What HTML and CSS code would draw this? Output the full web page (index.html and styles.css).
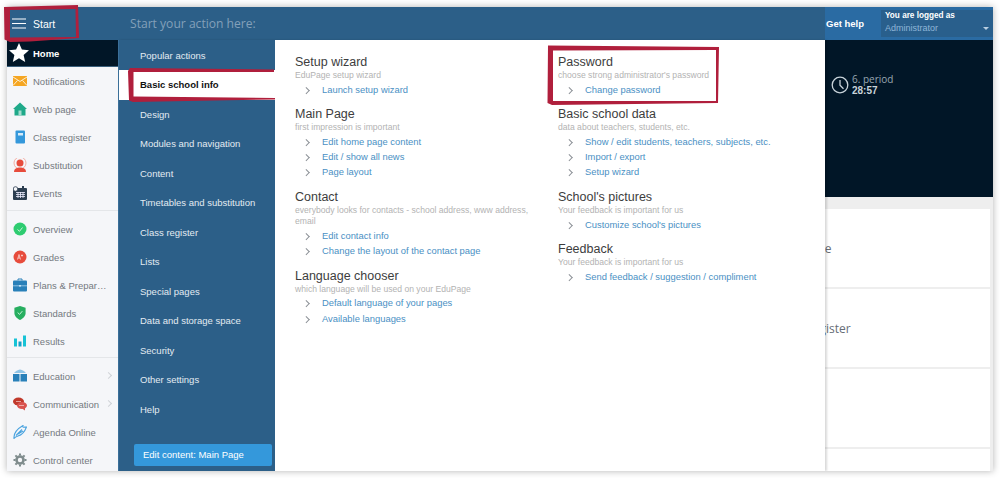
FILE: index.html
```html
<!DOCTYPE html>
<html lang="en">
<head>
<meta charset="utf-8">
<title>EduPage</title>
<link rel="stylesheet" href="styles.css">
</head>
<body>
<div class="window">
  <header class="topbar">
    <div class="start">
      <svg class="burger" viewBox="0 0 14 11" width="14" height="11"><path d="M0 1h14M0 5.500h14M0 10h14" stroke="#fff" stroke-width="1.200" fill="none"/></svg>
      <span>Start</span>
    </div>
    <div class="prompt">Start your action here:</div>
    <div class="help">Get help</div>
    <div class="user">
      <b>You are logged as</b>
      <span>Administrator</span>
      <i class="caret"></i>
    </div>
  </header>
  <div class="body">
    <nav class="sidebar">
      <div class="side-item home">
        <svg class="star" viewBox="0 0 20 20" width="20" height="20"><path d="M10 0l2.900 6.600 7.100.7-5.400 4.700 1.600 7-6.200-3.700-6.200 3.700 1.600-7L0 7.300l7.100-.7z" fill="#fff"/></svg>
        <span>Home</span>
      </div>
      <div class="group">
        <div class="side-item"><svg class="ico" viewBox="0 0 14 10"><rect width="14" height="10" fill="#f5a623"/><path d="M0 1l7 4.500L14 1M0 9.500l4.500-5M14 9.500l-4.500-5" stroke="#fff" stroke-width=".8" fill="none"/></svg><span>Notifications</span></div>
        <div class="side-item"><svg class="ico" viewBox="0 0 14 13"><path d="M7 0l7 6.500h-1.500V13h-11V6.500H0z" fill="#1fa98a"/><rect x="5.500" y="8" width="3" height="5" fill="#a5dccf"/></svg><span>Web page</span></div>
        <div class="side-item"><svg class="ico" viewBox="0 0 14 13"><rect x="2.500" width="9.500" height="13" rx="1" fill="#3498db"/><rect x="5" y="2.500" width="5" height="2.500" fill="#d5ebf9"/></svg><span>Class register</span></div>
        <div class="side-item"><svg class="ico" viewBox="0 0 14 14"><circle cx="7" cy="5" r="6" fill="none" stroke="#f4a79c" stroke-width=".9"/><circle cx="7" cy="5" r="3.500" fill="#e74c3c"/><path d="M1 14c0-3.500 3-4.500 6-4.500s6 1 6 4.500z" fill="#e74c3c"/></svg><span>Substitution</span></div>
        <div class="side-item"><svg class="ico" viewBox="0 0 14 14"><rect y="2" width="14" height="12" rx="1" fill="#2c3e50"/><path d="M3 6.500h9M3 8.500h9M3 10.500h9M5 6v6M7.500 6v6M10 6v6" stroke="#eef" stroke-width=".8"/><circle cx="2.500" cy="3" r="2.300" fill="#f5f6f9" stroke="#2c3e50" stroke-width=".8"/><rect x="9" width="2" height="3" fill="#2c3e50"/></svg><span>Events</span></div>
      </div>
      <div class="group">
        <div class="side-item"><svg class="ico" viewBox="0 0 14 14"><circle cx="7" cy="7" r="6.500" fill="#2ecc71"/><path d="M4.500 7.500l2 1.800 3-3.800" stroke="#c9f3da" stroke-width="1" fill="none"/></svg><span>Overview</span></div>
        <div class="side-item"><svg class="ico" viewBox="0 0 14 14"><circle cx="7" cy="7" r="6.500" fill="#e74c3c"/><path d="M4.500 9.500L6 4.500l1.500 5M5 8h2M9 4.500v2M8 5.500h2" stroke="#fbd9d5" stroke-width=".8" fill="none"/></svg><span>Grades</span></div>
        <div class="side-item"><svg class="ico" viewBox="0 0 14 13"><path d="M5 2V.5h4V2" stroke="#2980b9" fill="none"/><rect y="2" width="14" height="11" rx="1" fill="#2980b9"/><path d="M0 7.300h14" stroke="#bfe0f5" stroke-width=".7"/><rect x="6" y="6.500" width="2" height="1.600" fill="#bfe0f5"/></svg><span>Plans &amp; Prepar…</span></div>
        <div class="side-item"><svg class="ico" viewBox="0 0 14 15"><path d="M7 0l6 2v5.500c0 3.500-3 6-6 7.500-3-1.500-6-4-6-7.500V2z" fill="#27ae60"/><path d="M4.500 7l2 2 3-3.500" stroke="#d3f5e0" fill="none"/></svg><span>Standards</span></div>
        <div class="side-item"><svg class="ico" viewBox="0 0 14 13"><path d="M1 4h3v8H1z" fill="#17c3d6"/><path d="M5.500 7h3v5h-3z" fill="#17a0c9"/><path d="M10 1h3v11h-3z" fill="#17c3d6"/></svg><span>Results</span></div>
      </div>
      <div class="group last">
        <div class="side-item"><svg class="ico" viewBox="0 0 14 13"><path d="M7 0c2.500.5 4.500 1.500 6 3.500H1C2.500 1.500 4.500.5 7 0z" fill="#8fc4e6"/><path d="M0 4.500h6.500V12H0zM7.500 4.500H14V12H7.500z" fill="#2980b9"/></svg><span>Education</span><i class="chev"></i></div>
        <div class="side-item"><svg class="ico" viewBox="0 0 14 13"><ellipse cx="5.500" cy="4" rx="5.500" ry="4" fill="#c0392b"/><ellipse cx="9" cy="8" rx="5" ry="3.500" fill="#d9534f"/><path d="M9 11l3 2v-3z" fill="#d9534f"/><path d="M3 4h5M6 8h5" stroke="#f7cfcb" stroke-width=".7"/></svg><span>Communication</span><i class="chev"></i></div>
        <div class="side-item"><svg class="ico" viewBox="0 0 14 14"><path d="M1 13.500C.5 9 4 4 10 .5 9 3 11 2 13.500 2 12 6 9 10 5 11c-1.500.5-3 1-4 2.500zM3 10.500L9 4.500M5 9l5-3" fill="none" stroke="#4aa3df" stroke-width="1.100"/></svg><span>Agenda Online</span></div>
        <div class="side-item"><svg class="ico" viewBox="0 0 14 14"><circle cx="7" cy="7" r="3.500" fill="none" stroke="#7f8c8d" stroke-width="2.600"/><path d="M7 .5v13M.5 7h13M2.400 2.400l9.200 9.200M11.600 2.400l-9.200 9.200" stroke="#7f8c8d" stroke-width="2" stroke-dasharray="2 9"/></svg><span>Control center</span></div>
      </div>
    </nav>
    <main class="dashboard">
      <section class="hero">
        <div class="period">
          <svg viewBox="0 0 18 18" width="18" height="18"><circle cx="9" cy="9" r="7.800" fill="none" stroke="#c9d3da" stroke-width="1.300"/><path d="M9 4v5.200l3.500 3.600" fill="none" stroke="#c9d3da" stroke-width="1.300"/></svg>
          <div class="period-text"><span>6. period</span><b>28:57</b></div>
        </div>
      </section>
      <section class="cards">
        <div class="card">Web page</div>
        <div class="card">Class register</div>
        <div class="card"></div>
        <div class="card"></div>
      </section>
    </main>
  </div>
  <div class="menu">
    <aside class="menu-nav">
      <ul class="menu-list">
        <li>Popular actions</li>
        <li class="active">Basic school info</li>
        <li>Design</li>
        <li>Modules and navigation</li>
        <li>Content</li>
        <li>Timetables and substitution</li>
        <li>Class register</li>
        <li>Lists</li>
        <li>Special pages</li>
        <li>Data and storage space</li>
        <li>Security</li>
        <li>Other settings</li>
        <li>Help</li>
      </ul>
      <div class="edit-btn">Edit content: Main Page</div>
    </aside>
    <div class="menu-content">
      <div class="col">
        <div class="block"><h3>Setup wizard</h3><p>EduPage setup wizard</p><ul><li>Launch setup wizard</li></ul></div>
        <div class="block"><h3>Main Page</h3><p>first impression is important</p><ul><li>Edit home page content</li><li>Edit / show all news</li><li>Page layout</li></ul></div>
        <div class="block"><h3>Contact</h3><p>everybody looks for contacts - school address, www address, email</p><ul><li>Edit contact info</li><li>Change the layout of the contact page</li></ul></div>
        <div class="block"><h3>Language chooser</h3><p>which language will be used on your EduPage</p><ul><li>Default language of your pages</li><li>Available languages</li></ul></div>
      </div>
      <div class="col">
        <div class="block"><h3>Password</h3><p>choose strong administrator's password</p><ul><li>Change password</li></ul></div>
        <div class="block"><h3>Basic school data</h3><p>data about teachers, students, etc.</p><ul><li>Show / edit students, teachers, subjects, etc.</li><li>Import / export</li><li>Setup wizard</li></ul></div>
        <div class="block"><h3>School's pictures</h3><p>Your feedback is important for us</p><ul><li>Customize school's pictures</li></ul></div>
        <div class="block"><h3>Feedback</h3><p>Your feedback is important for us</p><ul><li>Send feedback / suggestion / compliment</li></ul></div>
      </div>
    </div>
  </div>
</div>
<svg class="marks" viewBox="0 0 1000 478" width="1000" height="478">
  <path d="M4 7L78 5 79 38 30 41.500 10 42 4.500 39.500zM10 10L75.500 9 76 37 10 37.500z"/>
  <path d="M130 68L274 69.500 274 72 133.500 72 133.500 96.500 275 98 275 99.500 133 102 129 100.500 128 71z"/>
  <path d="M548 45.500L719 47 718 103 552 105 547.500 103zM553 50.500L716 50 716 101 553 101z"/>
</svg>
</body>
</html>
```

FILE: styles.css
```css
* { box-sizing: border-box; }
html, body { margin: 0; padding: 0; background: #fff; height: 100%; overflow: hidden; }
body { padding: 7px; font-family: "Liberation Sans", Arial, sans-serif; }
ul { list-style: none; margin: 0; padding: 0; }

.window {
  position: relative;
  width: 986px;
  height: 464px;
  display: flex;
  flex-direction: column;
  overflow: hidden;
  background: #eee;
  box-shadow: 0 0 7px rgba(0, 0, 0, .3);
}

.topbar {
  flex: 0 0 33px;
  display: flex;
  align-items: center;
  background: #2c5f88;
  color: #fff;
}
.start {
  flex: 0 0 111px;
  display: flex;
  align-items: center;
  gap: 7px;
  padding-left: 5px;
  font-size: 10.500px;
}
.prompt {
  flex: 1;
  padding-left: 12px;
  font-family: "Open Sans", sans-serif;
  font-size: 12.100px;
  color: #83a0ba;
}
.help {
  align-self: stretch;
  flex: 0 0 56px;
  display: flex;
  align-items: center;
  font-size: 9.500px;
  font-weight: bold;
  padding-left: 1px;
  background: #2a6ba3;
}
.user {
  position: relative;
  flex: 0 0 112px;
  height: 33px;
  background: #2a6ba3;
  font-size: 9px;
  line-height: 12px;
  padding-top: 3px;
}
.user b, .user span {
  display: block;
  background: #295f8c;
  padding-left: 4px;
}
.user b { font-size: 8.200px; }
.user span { color: #8fb6d8; height: 15px; }
.caret {
  position: absolute;
  right: 4px;
  top: 20px;
  border: 3px solid transparent;
  border-top: 3px solid #b9cfe2;
}

.body { flex: 1; display: flex; min-height: 0; }

.sidebar {
  flex: 0 0 111px;
  background: #f5f6f9;
  color: #74797f;
  font-size: 9.500px;
}
.side-item {
  height: 28px;
  display: flex;
  align-items: center;
  padding-left: 6px;
  position: relative;
  white-space: nowrap;
}
.side-item.home {
  height: 27px;
  padding-left: 2px;
  background: #011627;
  color: #fff;
  font-weight: bold;
  border-bottom: 1px solid #3a5f7c;
}
.star { margin-right: 4px; }
.ico { width: 14px; height: 14px; margin-right: 6px; flex: none; }
.group { padding-bottom: 2px; border-bottom: 1px solid #e4e6e9; }
.home + .group { padding-bottom: 3px; }
.group + .group { padding-top: 4px; }
.group.last { border-bottom: 0; }
.chev {
  position: absolute;
  right: 7px;
  top: 11px;
  width: 5px;
  height: 5px;
  border-top: 1px solid #d0d3d8;
  border-right: 1px solid #d0d3d8;
  transform: rotate(45deg);
}

.dashboard { flex: 1; display: flex; flex-direction: column; min-width: 0; }
.hero {
  flex: 0 0 157px;
  background: #011627;
  display: flex;
  justify-content: flex-end;
  padding: 31px 0 0;
}
.period {
  width: 168px;
  display: flex;
  gap: 3px;
  padding-left: 6px;
  height: 28px;
  align-items: center;
  color: #c9d3da;
}
.period-text { display: flex; flex-direction: column; font-size: 10px; line-height: 12px; }
.period-text span { font-family: "Open Sans", sans-serif; color: #98a6b1; }
.cards {
  flex: 1;
  padding: 12px 3px 0 0;
  display: flex;
  flex-direction: column;
  gap: 2px;
  min-height: 0;
}
.card {
  flex: 0 0 78px;
  background: #fff;
  padding-left: 658px;
  display: flex;
  align-items: center;
  font-family: "Open Sans", sans-serif;
  font-size: 12px;
  color: #666e76;
}

.menu {
  position: absolute;
  left: 111px;
  top: 33px;
  bottom: 0;
  width: 707px;
  display: flex;
  box-shadow: 2px 0 2px rgba(0, 0, 0, .15);
}
.menu-nav {
  flex: 0 0 157px;
  background: #2c5f88;
  color: #fff;
  font-size: 9.500px;
  display: flex;
  flex-direction: column;
  border-left: 1px solid #3a6f99;
}
.menu-list { flex: 1; padding-top: .5px; }
.menu-list li {
  height: 29.500px;
  line-height: 29.500px;
  padding-left: 21px;
  color: #e3ebf2;
}
.menu-list li.active { background: #fff; color: #111; font-weight: bold; }
.edit-btn {
  margin: 0 3px 5px 15px;
  height: 22px;
  line-height: 22px;
  padding-left: 9px;
  background: #3498db;
  border-radius: 2px;
}
.menu-content {
  flex: 1;
  background: #fff;
  display: grid;
  grid-template-columns: 263px 1fr;
  padding: 15px 0 0 20px;
}
.block { margin-bottom: 10.500px; }
.block h3 {
  margin: 0;
  font-size: 12.500px;
  font-weight: normal;
  line-height: 15px;
  color: #3d3d3d;
}
.block p {
  margin: 0 0 .5px;
  font-size: 8.600px;
  line-height: 11px;
  color: #b3b3b3;
  max-width: 240px;
}
.block li {
  position: relative;
  height: 15.300px;
  line-height: 15.300px;
  padding-left: 27px;
  font-size: 9.400px;
  color: #4a90c4;
}
.block li::before {
  content: "";
  position: absolute;
  left: 9px;
  top: 6px;
  width: 3.500px;
  height: 3.500px;
  border-top: 1px solid #8a8f95;
  border-right: 1px solid #8a8f95;
  transform: rotate(45deg);
}

.marks { position: absolute; left: 0; top: 0; pointer-events: none; }
.marks path { fill: #b01f3c; fill-rule: evenodd; }
```
